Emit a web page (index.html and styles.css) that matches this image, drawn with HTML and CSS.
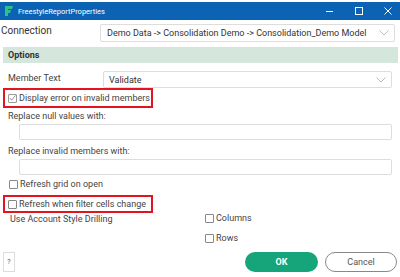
FILE: index.html
```html
<!DOCTYPE html>
<html lang="en">
<head>
    <meta charset="UTF-8">
    <title>FreestyleReportProperties</title>
    <link rel="stylesheet" href="styles.css">
</head>
<body>
    <div class="window">
        <div class="titlebar">
            <svg class="logo" width="8" height="10" viewBox="0 0 8 10">
                <path d="M0 0 H8 L7 3 H3 V4 H6 L5 7 H3 V10 H0 Z" fill="#2fbf8c"/>
            </svg>
            <span class="title">FreestyleReportProperties</span>
            <div class="controls">
                <svg width="8" height="8" viewBox="0 0 8 8"><path d="M0 4.5 H7" stroke="#fff" stroke-width="1"/></svg>
                <svg width="8" height="8" viewBox="0 0 8 8"><rect x="0.5" y="0.5" width="7" height="7" fill="none" stroke="#fff" stroke-width="1"/></svg>
                <svg width="8" height="8" viewBox="0 0 8 8"><path d="M0.5 0.5 L7.5 7.5 M7.5 0.5 L0.5 7.5" stroke="#fff" stroke-width="1"/></svg>
            </div>
        </div>

        <div class="connection-row">
            <label class="connection-label">Connection</label>
            <div class="select select-wide">
                <span>Demo Data -&gt; Consolidation Demo -&gt; Consolidation_Demo Model</span>
                <svg class="chevron" width="10" height="6" viewBox="0 0 10 6"><path d="M0.5 0.5 L5 5 L9.5 0.5" fill="none" stroke="#bbb" stroke-width="1"/></svg>
            </div>
        </div>

        <div class="options-header">Options</div>

        <div class="options">
            <div class="member-row">
                <label class="member-label">Member Text</label>
                <div class="select select-member">
                    <span>Validate</span>
                    <svg class="chevron" width="10" height="6" viewBox="0 0 10 6"><path d="M0.5 0.5 L5 5 L9.5 0.5" fill="none" stroke="#bbb" stroke-width="1"/></svg>
                </div>
            </div>

            <div class="highlight highlight-first">
                <span class="check checked">
                    <svg width="8" height="8" viewBox="0 0 8 8"><path d="M1 4 L3 6.5 L7.5 1" fill="none" stroke="#888" stroke-width="1"/></svg>
                </span>
                <span>Display error on invalid members</span>
            </div>

            <div class="field-label field-null">Replace null values with:</div>
            <div class="text-input"></div>

            <div class="field-label field-invalid">Replace invalid members with:</div>
            <div class="text-input"></div>

            <div class="check-row refresh-grid">
                <span class="check"></span>
                <span>Refresh grid on open</span>
            </div>

            <div class="highlight highlight-second">
                <span class="check"></span>
                <span>Refresh when filter cells change</span>
            </div>

            <div class="drilling">
                <span class="drilling-label">Use Account Style Drilling</span>
                <div class="drilling-options">
                    <div class="check-row">
                        <span class="check"></span>
                        <span>Columns</span>
                    </div>
                    <div class="check-row">
                        <span class="check"></span>
                        <span>Rows</span>
                    </div>
                </div>
            </div>
        </div>

        <div class="footer">
            <button class="help-btn">?</button>
            <div class="actions">
                <button class="ok-btn">OK</button>
                <button class="cancel-btn">Cancel</button>
            </div>
        </div>
    </div>
</body>
</html>
```

FILE: styles.css
```css
body {
    margin: 0;
    font-family: Roboto, "Liberation Sans", sans-serif;
    font-size: 9px;
    color: #444;
    background-color: #fff;
}
.window {
    width: 400px;
    height: 277px;
    overflow: hidden;
    padding-top: 2px;
    box-sizing: border-box;
}
.titlebar {
    height: 18px;
    background-color: #0c63b3;
    display: flex;
    align-items: center;
    padding-left: 5px;
}
.logo {
    margin-right: 5px;
}
.title {
    color: #fff;
    font-size: 7.5px;
}
.controls {
    margin-left: auto;
    display: flex;
    align-items: center;
    gap: 21px;
    padding-right: 8px;
}
.connection-row {
    display: flex;
    align-items: center;
    margin-top: 4px;
    padding-right: 5px;
}
.connection-label {
    width: 99px;
    padding-left: 1px;
    font-size: 10px;
    color: #333;
    margin-top: -6px;
}
.select {
    display: flex;
    align-items: center;
    border: 1px solid #ddd;
    border-radius: 2px;
    box-sizing: border-box;
    color: #333;
}
.select-wide {
    flex: 1;
    height: 18px;
    padding-left: 6px;
    font-size: 9px;
}
.chevron {
    margin-left: auto;
    margin-right: 5px;
}
.options-header {
    margin: 5px 2px 0 3px;
    height: 16px;
    line-height: 16px;
    background-color: #d5e6dc;
    font-weight: bold;
    color: #333;
    padding-left: 5px;
}
.options {
    padding: 0 8px 0 8px;
}
.member-row {
    display: flex;
    align-items: center;
    margin-top: 8px;
}
.member-label {
    width: 95px;
    margin-top: -4px;
}
.select-member {
    flex: 1;
    height: 17px;
    padding-left: 5px;
}
.highlight {
    display: flex;
    align-items: center;
    gap: 2px;
    width: 150px;
    box-sizing: border-box;
    border: 2px solid #e3141f;
    margin-left: -5px;
    padding-left: 3px;
}
.highlight-first {
    margin-top: 0;
    height: 20px;
}
.highlight-second {
    margin-top: 6px;
    height: 18px;
}
.check {
    width: 9px;
    height: 9px;
    border: 1px solid #888;
    border-radius: 1px;
    display: inline-flex;
    align-items: center;
    justify-content: center;
    box-sizing: border-box;
    flex-shrink: 0;
    background-color: #fff;
}
.checked {
    border-color: #999;
}
.field-label {
    height: 14px;
    line-height: 14px;
}
.field-null {
    margin-top: 1px;
}
.field-invalid {
    margin-top: 4px;
}
.text-input {
    margin-left: 11px;
    height: 16px;
    box-sizing: border-box;
    border: 1px solid #ddd;
    border-radius: 2px;
    margin-top: 1px;
}
.check-row {
    display: flex;
    align-items: center;
    gap: 2px;
    height: 10px;
}
.refresh-grid {
    margin-top: 4px;
    margin-left: 1px;
}
.drilling {
    display: flex;
    margin-top: 0;
}
.drilling-label {
    width: 195px;
    padding-left: 2px;
    padding-top: 1px;
}
.drilling-options {
    display: flex;
    flex-direction: column;
    gap: 10px;
    padding-top: 0;
}
.footer {
    display: flex;
    align-items: center;
    margin-top: 9px;
    padding: 0 3px;
}
.help-btn {
    width: 12px;
    height: 20px;
    border: 1px solid #ddd;
    background-color: #fff;
    font-family: Roboto, sans-serif;
    font-size: 7px;
    color: #555;
    padding: 0;
}
.actions {
    margin-left: auto;
    display: flex;
    gap: 7px;
}
.ok-btn {
    width: 73px;
    height: 20px;
    border: none;
    border-radius: 10px;
    background-color: #16a47a;
    color: #fff;
    font-family: Roboto, sans-serif;
    font-weight: bold;
    font-size: 9px;
}
.cancel-btn {
    width: 72px;
    height: 20px;
    border: 1px solid #888;
    border-radius: 10px;
    background-color: #fff;
    color: #555;
    font-family: Roboto, sans-serif;
    font-size: 9px;
}
```
